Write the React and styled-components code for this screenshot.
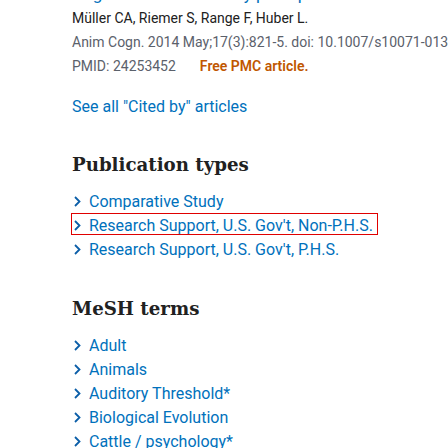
import React from 'react';
import styled, { createGlobalStyle } from 'styled-components';

const GlobalStyle = createGlobalStyle`
  html, body {
    margin: 0;
    padding: 0;
    background: #ffffff;
    overflow: hidden;
  }
  body {
    font-family: Roboto, "Noto Sans", sans-serif;
    color: #212121;
  }
`;

const Page = styled.div`
  width: 448px;
  height: 448px;
  overflow: hidden;
  padding-left: 72px;
  box-sizing: border-box;
`;

const Citation = styled.div`
  margin-top: -18px;
  white-space: nowrap;
`;

const CitationTitle = styled.a`
  display: block;
  font-size: 17px;
  line-height: 24px;
  color: #0071bc;
  text-decoration: none;
`;

const CitationLine = styled.div`
  font-size: 14px;
  line-height: 24px;
  color: ${(props) => props.color || '#5b616b'};
`;

const FreeArticle = styled.span`
  margin-left: 24px;
  color: #c05600;
  font-weight: 600;
`;

const SeeAll = styled.a`
  display: block;
  margin-top: 17px;
  font-size: 16px;
  line-height: 24px;
  color: #0071bc;
  text-decoration: none;
`;

const Section = styled.section`
  margin-top: ${(props) => props.top}px;
`;

const Heading = styled.h2`
  margin: 0 0 11px 0;
  font-family: "DejaVu Serif", "Liberation Serif", serif;
  font-weight: bold;
  font-size: 18.2px;
  line-height: 28px;
  color: #212121;
`;

const List = styled.ul`
  list-style: none;
  margin: 0;
  padding: 0;
`;

const Item = styled.li`
  display: flex;
  align-items: flex-start;
  height: 24px;
`;

const TermLink = styled.a`
  display: inline-flex;
  align-items: flex-start;
  gap: 8px;
  height: 20px;
  padding: 0 4px 0 2px;
  outline: ${(props) => (props.focused ? '1px solid #e00000' : 'none')};
  font-size: 16px;
  line-height: 24px;
  color: #0071bc;
  text-decoration: none;
  white-space: nowrap;
`;

const ChevronIcon = styled.svg`
  flex: none;
  margin-top: 6px;
`;

const Chevron = () => (
  <ChevronIcon width="7" height="11" viewBox="0 0 7 11" fill="none">
    <path d="M1 1 L5.5 5.5 L1 10" stroke="#0b5ea8" strokeWidth="1.8" />
  </ChevronIcon>
);

const publicationTypes = [
  'Comparative Study',
  "Research Support, U.S. Gov't, Non-P.H.S.",
  "Research Support, U.S. Gov't, P.H.S.",
];

const meshTerms = [
  'Adult',
  'Animals',
  'Auditory Threshold*',
  'Biological Evolution',
  'Cattle / psychology*',
];

export default function App() {
  return (
    <>
      <GlobalStyle />
      <Page>
        <Citation>
          <CitationTitle>Dogs' use of the solidity principle: revisited.</CitationTitle>
          <CitationLine color="#212121">Müller CA, Riemer S, Range F, Huber L.</CitationLine>
          <CitationLine>Anim Cogn. 2014 May;17(3):821-5. doi: 10.1007/s10071-013-0713-z.</CitationLine>
          <CitationLine>
            PMID: 24253452
            <FreeArticle>Free PMC article.</FreeArticle>
          </CitationLine>
        </Citation>
        <SeeAll>See all "Cited by" articles</SeeAll>

        <Section top={32}>
          <Heading>Publication types</Heading>
          <List>
            {publicationTypes.map((t, i) => (
              <Item key={t}>
                <TermLink focused={i === 1}>
                  <Chevron />
                  {t}
                </TermLink>
              </Item>
            ))}
          </List>
        </Section>

        <Section top={33}>
          <Heading>MeSH terms</Heading>
          <List>
            {meshTerms.map((t) => (
              <Item key={t}>
                <TermLink>
                  <Chevron />
                  {t}
                </TermLink>
              </Item>
            ))}
          </List>
        </Section>
      </Page>
    </>
  );
}
